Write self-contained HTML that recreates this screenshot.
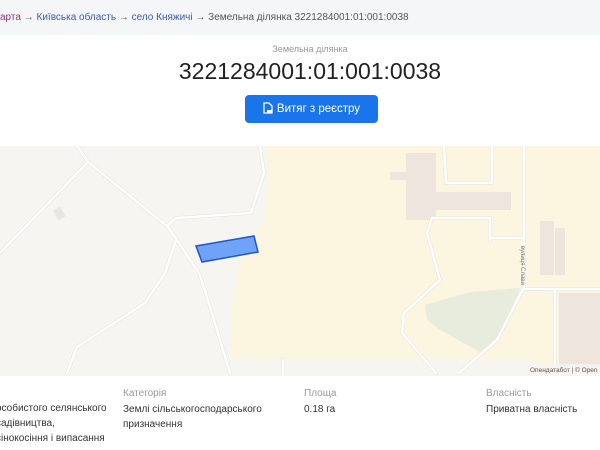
<!DOCTYPE html>
<html><head><meta charset="utf-8"><style>
*{margin:0;padding:0;box-sizing:border-box}
body{width:600px;height:450px;overflow:hidden;background:#fff;font-family:"Liberation Sans","DejaVu Sans",sans-serif;position:relative}
.bc{position:absolute;left:0;top:0;width:600px;height:35px;background:#f5f6f8;font-size:10px;line-height:35px;color:#555;white-space:nowrap;padding-left:0}
.bc a{color:#3a5ca8;text-decoration:none}
.bc .p{color:#8a3a7a}
.t1{position:absolute;top:44px;left:0;width:620px;text-align:center;font-size:9px;color:#999}
.t2{position:absolute;top:58px;left:0;width:620px;text-align:center;font-size:23px;color:#222}
.btn{position:absolute;left:245px;top:95px;width:133px;height:28px;background:#1a75eb;border-radius:4px;color:#fff;font-size:11.5px;line-height:28px;text-align:center}
.map{position:absolute;left:0;top:146px}
.col{position:absolute;top:386px;font-size:10px;line-height:15px;color:#333}
.col .l{color:#999;margin-bottom:1px}
</style></head><body>
<div class="bc"><span class="p">арта</span> → <a>Київська область</a> → <a>село Княжичі</a> → Земельна ділянка 3221284001:01:001:0038</div>
<div class="t1">Земельна ділянка</div>
<div class="t2">3221284001:01:001:0038</div>
<div class="btn"><svg width="10" height="12" viewBox="0 0 10 12" style="vertical-align:-2px;margin-right:4px"><path d="M1 1h5l3 3v7H1z" fill="none" stroke="#fff" stroke-width="1.3"/><rect x="4" y="8" width="5" height="3" fill="#fff"/></svg>Витяг з реєстру</div>
<svg class="map" width="600" height="230" viewBox="0 146 600 230">
<rect x="0" y="146" width="600" height="230" fill="#f7f5f2"/>
<path d="M266 146H600V376H560L530 360H300L230 358L232 300L237 275L245 240L262 225L268 190Z" fill="#fcf5df"/>
<path d="M425 305L470 292L520 288L505 330L480 352L440 330L427 320Z" fill="#e8ecdd"/>
<path d="M390 172H406V153H436V192H511V210H436V220H406V180H390Z" fill="#eee6de"/>
<rect x="540" y="221" width="14" height="54" fill="#eee6de"/><rect x="555" y="228" width="10" height="47" fill="#eee6de"/>
<rect x="559" y="293" width="41" height="74" fill="#eee6de"/>
<rect x="55" y="208" width="8" height="11" fill="#e8e5e2" transform="rotate(-30 59 213)"/>
<g fill="none" stroke="#e4e0dc" stroke-width="3.6" stroke-linejoin="round" stroke-linecap="round">
<path d="M78 147L88 162L168 227L199 273L207 297L230 373"/>
<path d="M88 162L0 253"/>
<path d="M168 225L176 218L251 213L264 173L260 147"/>
<path d="M176 240L165 273L145 303L77 347L67 373"/>
<path d="M444 147L446 183L492 183L492 147"/>
<path d="M524 147V287L497 340L459 373"/>
<path d="M490 240V218L432 218L427 233L440 280L404 313L402 333L436 373"/>
<path d="M490 238H524"/>
<path d="M524 289H600"/>
<path d="M555 289V373"/>
<path d="M283 360V376"/>
</g>
<g fill="none" stroke="#fff" stroke-width="2.6" stroke-linejoin="round" stroke-linecap="round">
<path d="M78 147L88 162L168 227L199 273L207 297L230 373"/>
<path d="M88 162L0 253"/>
<path d="M168 225L176 218L251 213L264 173L260 147"/>
<path d="M176 240L165 273L145 303L77 347L67 373"/>
<path d="M444 147L446 183L492 183L492 147"/>
<path d="M524 147V287L497 340L459 373"/>
<path d="M490 240V218L432 218L427 233L440 280L404 313L402 333L436 373"/>
<path d="M490 238H524"/>
<path d="M524 289H600"/>
<path d="M555 289V373"/>
<path d="M283 360V376"/>
</g>
<text x="521" y="246" font-size="6" fill="#777" transform="rotate(90 521 246)" font-family="Liberation Sans,sans-serif">вулиця Слави</text>
<path d="M196 246L254 236L258 252L202 262Z" fill="#6fa3f7" stroke="#1f56c9" stroke-width="1.5"/>
<rect x="527" y="364" width="73" height="11" fill="#f6f4f1" opacity="0.8"/>
<text x="530" y="372" font-size="6.5" fill="#555" font-family="Liberation Sans,sans-serif">Опендатабот | © Open</text>
</svg>
<div class="col" style="left:-4px;top:401px">особистого селянського<br> садівництва,<br>сінокосіння і випасання</div>
<div class="col" style="left:123px"><div class="l">Категорія</div>Землі сільськогосподарського<br>призначення</div>
<div class="col" style="left:304px"><div class="l">Площа</div>0.18 га</div>
<div class="col" style="left:486px"><div class="l">Власність</div>Приватна власність</div>
</body></html>
